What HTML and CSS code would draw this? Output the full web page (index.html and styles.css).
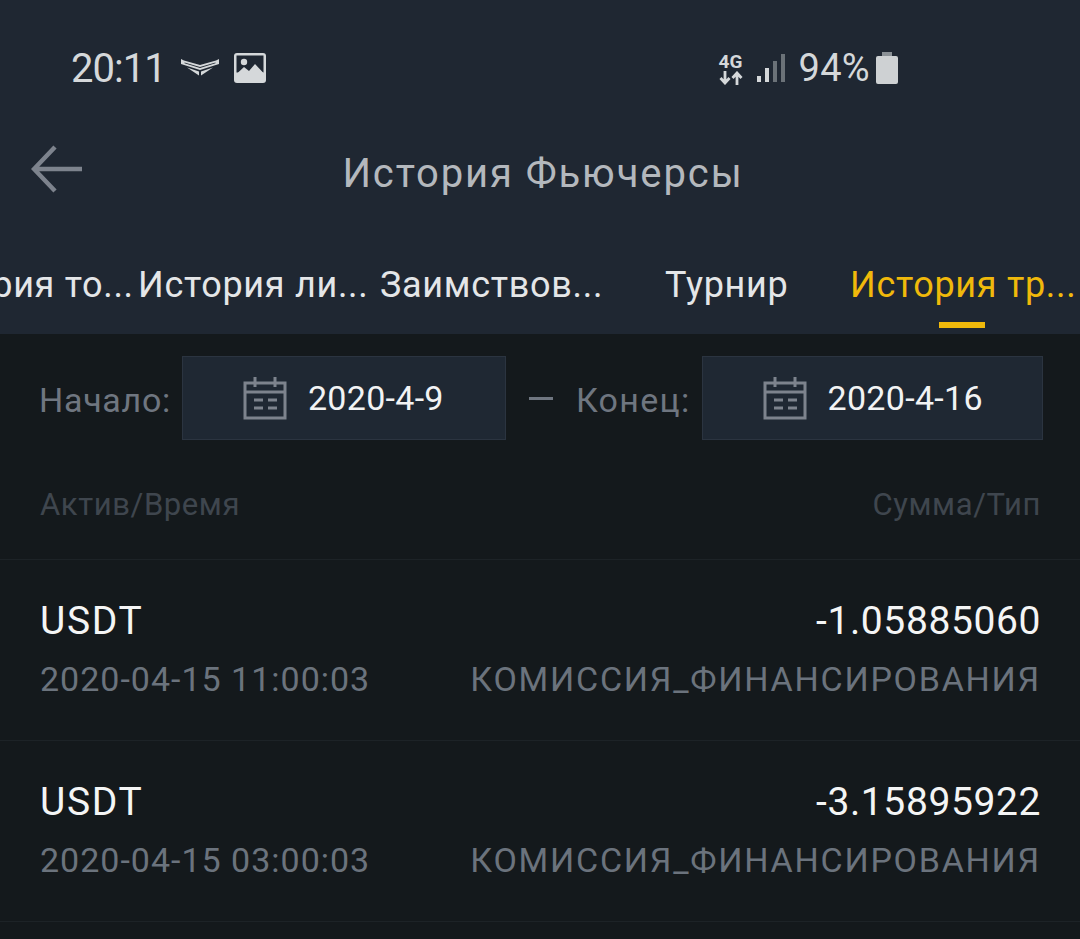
FILE: index.html
```html
<!DOCTYPE html>
<html lang="ru">
<head>
  <meta charset="UTF-8" />
  <meta name="viewport" content="width=device-width, initial-scale=1.0" />
  <title>История Фьючерсы</title>
  <link rel="stylesheet" href="styles.css">
</head>
<body>
  <div class="top">
    <div class="status">
      <div class="status-left">
        <span class="clock">20:11</span>
        <svg class="ic-wings" width="38" height="18" viewBox="0 0 38 18"><path d="M0 1l3 1.500 16 4.500 16-4.500L38 1v5l-19 6L0 6zM3.500 4.500v.8L19 10l15.500-4.700v-.8L19 9z" fill="#d5d8da" fill-rule="evenodd"/><path d="M6 9.500l12 4v4zM32 9.500l-12 4v4z" fill="#d5d8da"/></svg>
        <svg class="ic-pic" width="32" height="30" viewBox="0 0 32 30"><rect width="32" height="30" rx="3" fill="#d5d8da"/><rect x="2.500" y="2.500" width="27" height="17" fill="#1f2732"/><circle cx="10" cy="9" r="3.200" fill="#d5d8da"/><path d="M2.500 21l7.500-7 5 4 6-7 8.500 9v3h-27z" fill="#d5d8da"/></svg>
      </div>
      <div class="status-right">
        <div class="net"><span class="net-label">4G</span>
          <svg width="24" height="14" viewBox="0 0 24 14"><path d="M6 0v11M1.500 7L6 12l4.500-5M18 14V2M13.500 7L18 2l4.500 5" fill="none" stroke="#d5d8da" stroke-width="2.800"/></svg>
        </div>
        <svg class="ic-signal" width="28" height="30" viewBox="0 0 28 30"><rect x="0" y="23" width="4" height="6" fill="#d5d8da"/><rect x="8" y="15" width="4" height="14" fill="#d5d8da"/><rect x="16" y="8" width="4" height="21" fill="#6b7278"/><rect x="24" y="1" width="4" height="28" fill="#6b7278"/></svg>
        <span class="battery-pct">94%</span>
        <svg width="22" height="32" viewBox="0 0 22 32"><rect x="6" y="0" width="10" height="5" fill="#8b9196"/><rect x="0" y="4" width="22" height="28" rx="2" fill="#ced1d3"/></svg>
      </div>
    </div>
    <div class="titlebar">
      <svg class="back" width="52" height="48" viewBox="0 0 52 48"><path d="M24 2L3 24l21 22M3 24h48" fill="none" stroke="#7d838d" stroke-width="4.500"/></svg>
      <h1>История Фьючерсы</h1>
    </div>
    <div class="tabs">
      <span class="tab tab-1">ория то...</span>
      <span class="tab tab-2">История ли...</span>
      <span class="tab tab-3">Заимствов...</span>
      <span class="tab tab-4">Турнир</span>
      <span class="tab tab-5 active">История тр...</span>
    </div>
  </div>

  <div class="filters">
    <span class="filter-label">Начало:</span>
    <div class="date-box">
      <svg width="44" height="44" viewBox="0 0 44 44"><path d="M2 7h40v35H2zM2 16h40M12 1v10M32 1v10M11 24h9M25 24h9M11 32h9M25 32h9" fill="none" stroke="#7d838d" stroke-width="3"/></svg>
      <span>2020-4-9</span>
    </div>
    <span class="dash"></span>
    <span class="filter-label filter-label-end">Конец:</span>
    <div class="date-box date-box-last">
      <svg width="44" height="44" viewBox="0 0 44 44"><path d="M2 7h40v35H2zM2 16h40M12 1v10M32 1v10M11 24h9M25 24h9M11 32h9M25 32h9" fill="none" stroke="#7d838d" stroke-width="3"/></svg>
      <span>2020-4-16</span>
    </div>
  </div>

  <div class="list-head">
    <span>Актив/Время</span>
    <span>Сумма/Тип</span>
  </div>

  <div class="row">
    <div class="row-line"><span class="asset">USDT</span><span class="amount">-1.05885060</span></div>
    <div class="row-line"><span class="sub">2020-04-15 11:00:03</span><span class="sub kind">КОМИССИЯ_ФИНАНСИРОВАНИЯ</span></div>
  </div>
  <div class="row">
    <div class="row-line"><span class="asset">USDT</span><span class="amount">-3.15895922</span></div>
    <div class="row-line"><span class="sub">2020-04-15 03:00:03</span><span class="sub kind">КОМИССИЯ_ФИНАНСИРОВАНИЯ</span></div>
  </div>
</body>
</html>
```

FILE: styles.css
```css
html, body {
  margin: 0;
  padding: 0;
}
body {
  width: 1080px;
  height: 939px;
  overflow: hidden;
  background-color: #14191c;
  font-family: Roboto, "Liberation Sans", sans-serif;
}
.top {
  height: 334px;
  background-color: #1f2732;
}
.status {
  height: 108px;
  padding: 28px 182px 0 71px;
  box-sizing: border-box;
  display: flex;
  align-items: center;
  justify-content: space-between;
}
.status-left, .status-right {
  display: flex;
  align-items: center;
}
.clock {
  font-size: 40px;
  letter-spacing: -1px;
  color: #d5d8da;
}
.ic-wings {
  margin-left: 15px;
  margin-bottom: 2px;
}
.ic-pic {
  margin-left: 15px;
}
.net {
  display: flex;
  flex-direction: column;
  align-items: center;
  width: 26px;
}
.net-label {
  font-size: 19px;
  line-height: 19px;
  font-weight: 700;
  color: #d5d8da;
}
.ic-signal {
  margin-left: 13px;
}
.battery-pct {
  margin: 0 6px 0 14px;
  font-size: 38px;
  letter-spacing: .3px;
  color: #d5d8da;
}
.titlebar {
  height: 124px;
  position: relative;
  display: flex;
  align-items: center;
  justify-content: center;
}
.back {
  position: absolute;
  left: 31px;
  top: 37px;
}
h1 {
  margin: 6px 0 0 6px;
  font-size: 40px;
  font-weight: 400;
  letter-spacing: 1.9px;
  color: #b4b8bd;
}
.tabs {
  height: 102px;
  overflow: hidden;
  display: flex;
  font-size: 36px;
  letter-spacing: .7px;
  color: #e4e6e8;
  white-space: nowrap;
}
.tab {
  display: block;
  height: 96px;
  box-sizing: border-box;
  padding-top: 13px;
  line-height: 80px;
}
.tab-1 { margin-left: -29px; width: 167px; }
.tab-2 { width: 242px; }
.tab-3 { width: 285px; }
.tab-4 { width: 185px; }
.active {
  color: #f0b90b;
  position: relative;
}
.active::after {
  content: "";
  position: absolute;
  left: 89px;
  bottom: 0;
  width: 46px;
  height: 6px;
  background-color: #f0b90b;
}
.filters {
  height: 84px;
  margin-top: 22px;
  padding: 0 37px 0 39px;
  display: flex;
  align-items: center;
  font-size: 34px;
  color: #6f7680;
}
.filter-label {
  padding-top: 3px;
  letter-spacing: .7px;
}
.filter-label-end {
  letter-spacing: 1.3px;
}
.date-box {
  margin-left: 11px;
  width: 324px;
  height: 84px;
  box-sizing: border-box;
  border: 1px solid #2b3440;
  background-color: #1f2833;
  display: flex;
  align-items: center;
  padding-left: 60px;
  gap: 21px;
  font-size: 34px;
  letter-spacing: .3px;
  color: #f2f3f4;
}
.date-box-last {
  flex: 1;
}
.dash {
  width: 24px;
  height: 3px;
  margin: 0 23px;
  background-color: #6f7680;
}
.list-head {
  height: 120px;
  padding: 10px 39px 0 40px;
  box-sizing: border-box;
  display: flex;
  align-items: center;
  justify-content: space-between;
  font-size: 31px;
  letter-spacing: .6px;
  color: #3f464e;
  border-bottom: 1px solid #1d2327;
}
.row {
  height: 181px;
  padding: 32px 39px 0 40px;
  box-sizing: border-box;
  border-bottom: 1px solid #1d2327;
}
.row-line {
  display: flex;
  justify-content: space-between;
  align-items: center;
}
.asset, .amount {
  height: 58px;
  line-height: 58px;
  font-size: 39px;
  color: #f4f5f5;
}
.asset {
  letter-spacing: 1.7px;
}
.amount {
  letter-spacing: .6px;
}
.sub {
  height: 58px;
  line-height: 58px;
  font-size: 34px;
  letter-spacing: 1px;
  color: #6b737d;
}
.kind {
  letter-spacing: 1.75px;
}
```
